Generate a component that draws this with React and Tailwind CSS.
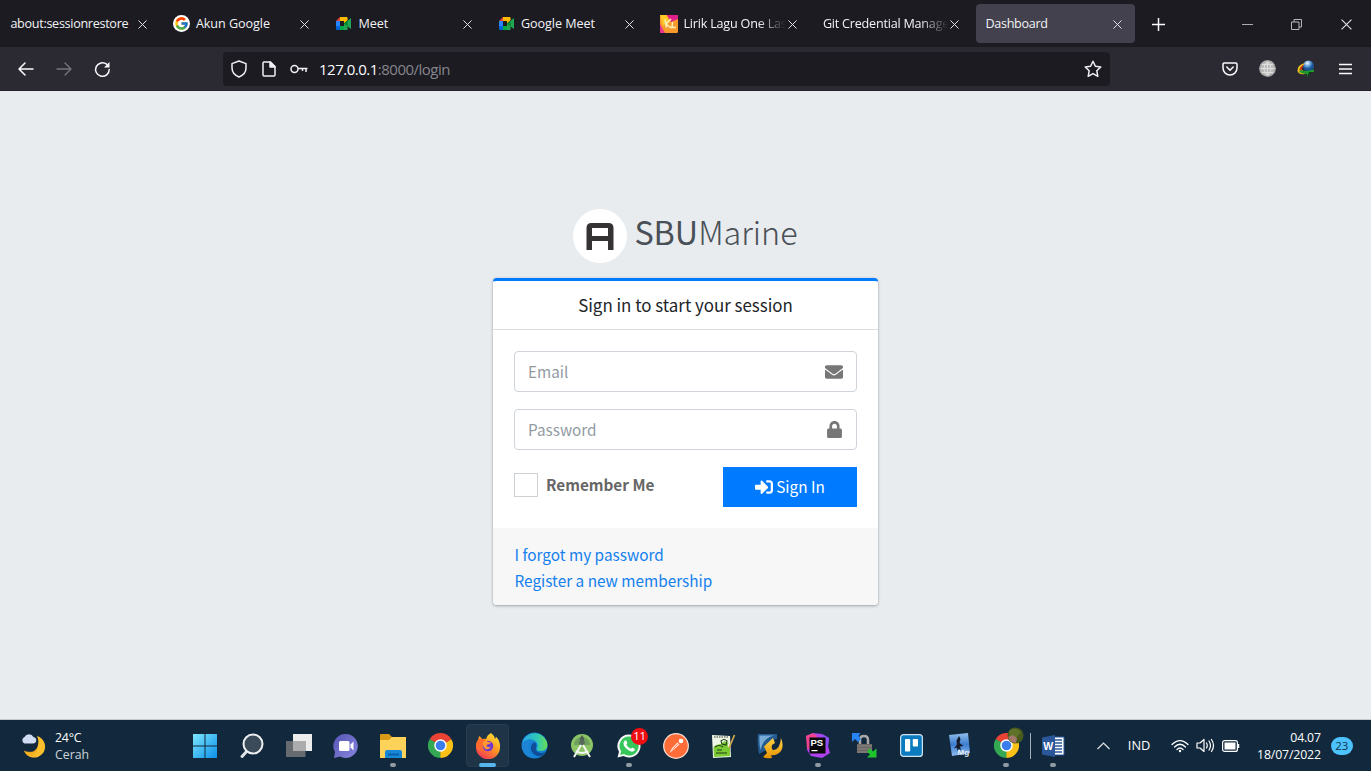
import React from "react";
import { FcGoogle } from "react-icons/fc";
import { FaEnvelope, FaLock, FaSignInAlt } from "react-icons/fa";

const Cross = ({ size = 9, w = 1.1 }) => (
  <svg width={size} height={size} viewBox="0 0 10 10" fill="none" stroke="#e4e4ea" strokeWidth={w}>
    <path d="M.5.5l9 9M9.5.5l-9 9" />
  </svg>
);

const MeetIcon = () => (
  <svg width="17" height="15" viewBox="0 0 17 15">
    <path d="M5 1h7v4H5z" fill="#ffba00" />
    <path d="M5 1v4H1z" fill="#ea4335" />
    <path d="M1 5h4v5H1z" fill="#2684fc" />
    <path d="M1 10h4v4H2.200Q1 14 1 12.800z" fill="#0066da" />
    <path d="M5 10h4.500l3 4H5z" fill="#00ac47" />
    <path d="M5 5h4v5H5z" fill="#1c1b22" />
    <path d="M9 7.500l3.600-3.500V2Q12.600 1 11.500 1H9z" fill="#ffba00" />
    <path d="M9 7.500l7-5.500v11l-3.500-2.500V14H9z" fill="#22a550" />
    <path d="M9 7.500l3.600-3v6z" fill="#00832d" />
  </svg>
);

const LyricIcon = () => (
  <svg width="18" height="18" viewBox="0 0 18 18">
    <rect width="18" height="18" rx="1.500" fill="#f79a2c" />
    <path d="M7 0h11v4L11 7z" fill="#e0218a" />
    <path d="M0 9l5 9H0z" fill="#e8338d" />
    <path d="M0 0h6l3 5-6 6z" fill="#ffc928" />
    <path d="M5 4.500l1.500 8M11 4l-5 5 5 4M12.500 7l-.5 5.500h4" stroke="#fff0b8" strokeWidth="1.600" fill="none" />
  </svg>
);

const tabs = [
  { title: "about:sessionrestore", spacing: "tracking-[-0.3px]" },
  {
    title: "Akun Google",
    spacing: "tracking-[-0.06px]",
    icon: (
      <span className="flex h-[17px] w-[17px] items-center justify-center rounded-full bg-white">
        <FcGoogle size={15} />
      </span>
    ),
  },
  { title: "Meet", spacing: "tracking-[-0.06px]", icon: <MeetIcon /> },
  { title: "Google Meet", spacing: "tracking-[-0.06px]", icon: <MeetIcon /> },
  { title: "Lirik Lagu One Las", spacing: "tracking-[-0.2px]", icon: <LyricIcon />, fade: true },
  { title: "Git Credential Manage", spacing: "tracking-[-0.22px]", fade: true },
  { title: "Dashboard", spacing: "tracking-[-0.3px]", active: true },
];

function TabStrip() {
  return (
    <div className="flex h-[47px] bg-[#1c1b22] text-[12.600px] text-[#f3f3f6]">
      <div className="ml-[-0.600px] flex">
        {tabs.map((t) => (
          <div key={t.title} className="flex w-[162.500px] px-[2px] py-1">
            <div
              className={
                t.active
                  ? "flex min-w-0 flex-1 items-center rounded bg-[#42414d] pr-[13px] pl-[9px]"
                  : "flex min-w-0 flex-1 items-center pr-[13px] pl-[9px]"
              }
            >
              {t.icon && <span className="mr-[5px] flex w-[18px] shrink-0 items-center">{t.icon}</span>}
              <span
                className={
                  t.fade
                    ? "min-w-0 flex-1 pt-[2px] whitespace-nowrap [mask-image:linear-gradient(to_left,transparent,black_28px)]"
                    : "min-w-0 flex-1 pt-[2px] whitespace-nowrap"
                }
              >
                <span className={t.spacing}>{t.title}</span>
              </span>
              <span className="ml-[2px] flex shrink-0 pt-px">
                <Cross />
              </span>
            </div>
          </div>
        ))}
      </div>
      <div className="flex flex-1 items-center pt-px">
        <svg className="ml-[15px]" width="13" height="13" viewBox="0 0 13 13" stroke="#fbfbfe" strokeWidth="1.500">
          <path d="M6.500 0v13M0 6.500h13" />
        </svg>
        <svg className="ml-[77px]" width="11" height="11" viewBox="0 0 11 11" stroke="#a9a9af" strokeWidth="1">
          <path d="M0 5.500h11" />
        </svg>
        <svg className="ml-[38px]" width="11" height="11" viewBox="0 0 11 11" fill="none" stroke="#b5b5bb">
          <path d="M.5 3h7.500v7.500H.5zM3 3V.5h7.500V8H8" />
        </svg>
        <span className="ml-[39px] flex">
          <Cross size={11} w={1} />
        </span>
      </div>
    </div>
  );
}

function NavBar() {
  return (
    <div className="flex h-11 items-center border-b border-[#24232b] bg-[#2b2a33]">
      <svg className="ml-[18px]" width="16" height="14" viewBox="0 0 16 14" fill="none" stroke="#fbfbfe" strokeWidth="1.500" strokeLinecap="round" strokeLinejoin="round">
        <path d="M15 7H1M7 1L1 7l6 6" />
      </svg>
      <svg className="ml-[22px]" width="16" height="14" viewBox="0 0 16 14" fill="none" stroke="#77767f" strokeWidth="1.300" strokeLinecap="round" strokeLinejoin="round">
        <path d="M1 7h14M9 1l6 6-6 6" />
      </svg>
      <svg className="mt-px ml-[22px]" width="17" height="17" viewBox="0 0 17 17" fill="none" stroke="#fbfbfe" strokeWidth="1.500" strokeLinecap="round">
        <path d="M15.200 8.500A6.800 6.800 0 1 1 12.600 3.200" />
        <path d="M15.500 1v5.500H10z" fill="#fbfbfe" stroke="none" />
      </svg>
      <div className="ml-[112px] flex h-[34px] w-[887px] items-center rounded bg-[#1c1b22]">
        <svg className="ml-2" width="16" height="18" viewBox="0 0 16 18" fill="none" stroke="#f0f0f4" strokeWidth="1.500" strokeLinejoin="round">
          <path d="M8 1l7 2.600V8c0 4-3 7.300-7 9-4-1.700-7-5-7-9V3.600z" />
        </svg>
        <svg className="ml-[15px]" width="14" height="16" viewBox="0 0 14 16" fill="none" stroke="#f0f0f4" strokeWidth="1.500" strokeLinejoin="round">
          <path d="M1 2q0-1 1-1h6.500L13 5.500V14q0 1-1 1H2q-1 0-1-1z" />
          <path d="M8 1v5h5z" fill="#f0f0f4" />
        </svg>
        <svg className="ml-[14px]" width="18" height="10" viewBox="0 0 18 10" fill="none" stroke="#f0f0f4" strokeWidth="1.500">
          <circle cx="4.500" cy="5" r="3.500" />
          <path d="M8 4.500h9.500M12.500 4.500V7M16 4.500V8" />
        </svg>
        <span className="ml-[11px] flex-1 pt-[2px] text-[15px] tracking-[-0.5px] text-[#85858c]">
          <span className="text-[#fbfbfe]">127.0.0.1</span>:8000/login
        </span>
        <svg className="mr-2" width="18" height="18" viewBox="0 0 18 18" fill="none" stroke="#f0f0f4" strokeWidth="1.500" strokeLinejoin="round">
          <path d="M9 1.200l2.400 5 5.400.7-4 3.800 1 5.600L9 13.600l-4.800 2.700 1-5.600-4-3.800 5.400-.7z" />
        </svg>
      </div>
      <svg className="ml-[112px]" width="16" height="14" viewBox="0 0 16 14" fill="none" stroke="#fbfbfe" strokeWidth="1.500" strokeLinejoin="round" strokeLinecap="round">
        <path d="M2.200 1h11.600Q15 1 15 2.200V6A7 7 0 0 1 1 6V2.200Q1 1 2.200 1zM4.800 5L8 8.200 11.200 5" />
      </svg>
      <svg className="ml-[21px]" width="17" height="17" viewBox="0 0 17 17">
        <circle cx="8.500" cy="8.500" r="8.300" fill="#b9b9b9" />
        <path d="M8.500 1v15M1 8.500h15M2.500 4.500h12M2.500 12.500h12M8.500 1Q1.500 8.500 8.500 16M8.500 1q7 7.500 0 15" stroke="#e2e2e2" fill="none" strokeWidth=".9" />
        <circle cx="8.500" cy="8.500" r="7.500" fill="none" stroke="#9c9c9c" strokeWidth=".8" />
      </svg>
      <svg className="ml-[21px]" width="18" height="17" viewBox="0 0 18 17">
        <defs>
          <radialGradient id="orb" cx=".4" cy=".25">
            <stop offset="0" stopColor="#f1f8ff" />
            <stop offset=".6" stopColor="#5a9bd8" />
            <stop offset="1" stopColor="#1b5395" />
          </radialGradient>
        </defs>
        <circle cx="11.500" cy="6" r="5.500" fill="url(#orb)" />
        <path d="M8 3Q0 5 .5 11 2 15 8 14L6 11Q3 9 8 3z" fill="#e9c61a" />
        <path d="M7 4.500Q2 7 2.500 11l2-1Q5 7 7 4.500z" fill="#c52a1a" />
        <path d="M4 10q5 2 13-.5L17 12h-3l-4 5v-3q-5 0-8-2z" fill="#1f9a2a" />
        <path d="M12 12h3l-5 5z" fill="#07410b" />
      </svg>
      <svg className="ml-[24px]" width="13" height="12" viewBox="0 0 13 12" stroke="#fbfbfe" strokeWidth="1.500">
        <path d="M0 1.500h13M0 6h13M0 10.500h13" />
      </svg>
    </div>
  );
}

function Field({ label, children }) {
  return (
    <div className="flex h-[41px] items-center justify-between rounded-[4px] border border-[#ced4da] bg-white px-[13px] text-[15.300px] leading-none text-[#939ba2]">
      <span>{label}</span>
      <span className="flex text-[#777]">{children}</span>
    </div>
  );
}

function LoginPage() {
  return (
    <main className="flex h-[629px] flex-col items-center border-b border-[#c4c8cb] bg-[#e9ecef] pt-[118px] font-['Noto_Sans_CJK_SC',sans-serif]">
      <div className="flex h-[54px] items-center text-[32.300px] leading-none text-[#495057]">
        <svg className="mr-[7px]" width="54" height="54" viewBox="0 0 54 54">
          <circle cx="27" cy="27" r="27" fill="#fff" />
          <path d="M13.500 41V19q0-5 5-5h17q5 0 5 5v22h-5.500v-9H19v9zM19 19v8h16v-8z" fill="#343233" fillRule="evenodd" />
        </svg>
        <span className="-mt-[10px] whitespace-nowrap">
          SBU<span className="font-light">Marine</span>
        </span>
      </div>
      <section className="mt-[15px] flex w-[385px] flex-col overflow-hidden rounded-[4px] border-t-[3px] border-[#007bff] bg-white shadow-[0_0_1px_rgba(0,0,0,.2),0_1px_3px_rgba(0,0,0,.3)]">
        <header className="flex h-[49px] items-center justify-center border-b border-[#dcdddf] text-[16.900px] leading-none text-[#212529]">
          Sign in to start your session
        </header>
        <div className="flex h-[198px] flex-col gap-[17px] px-[21px] pt-[21px]">
          <Field label="Email">
            <FaEnvelope size={18} />
          </Field>
          <Field label="Password">
            <FaLock size={17} />
          </Field>
          <div className="flex justify-between">
            <label className="mt-[6px] flex h-6 items-center gap-2 text-[15.300px] leading-none font-bold text-[#666]">
              <span className="h-6 w-6 border border-[#ccd1d5] bg-white" />
              Remember Me
            </label>
            <button className="flex h-10 w-[134px] items-center justify-center gap-[3px] bg-[#007bff] text-[15.300px] leading-none text-white">
              <FaSignInAlt size={18} />
              Sign In
            </button>
          </div>
        </div>
        <footer className="flex h-[77px] flex-col bg-[#f7f7f7] px-[21.500px] pt-[12.500px] text-[15.350px] leading-[26px] text-[#1480ee]">
          <a>I forgot my password</a>
          <a>Register a new membership</a>
        </footer>
      </section>
    </main>
  );
}

const WindowsIcon = () => (
  <svg width="26" height="26" viewBox="0 0 26 26">
    <defs>
      <linearGradient id="win" x2="1" y2="1">
        <stop offset="0" stopColor="#7de6ff" />
        <stop offset="1" stopColor="#0b91e8" />
      </linearGradient>
    </defs>
    <path d="M1 1h11.500v11.500H1zM13.500 1H25v11.500H13.500zM1 13.500h11.500V25H1zM13.500 13.500H25V25H13.500z" fill="url(#win)" />
  </svg>
);

const SearchIcon = () => (
  <svg width="26" height="26" viewBox="0 0 26 26">
    <path d="M8.500 17.500L3 23.500" stroke="#dfe3e7" strokeWidth="3" strokeLinecap="round" />
    <circle cx="14" cy="11" r="9.500" fill="#3c4b59" stroke="#eef0f2" strokeWidth="2" />
  </svg>
);

const TaskViewIcon = () => (
  <svg width="26" height="26" viewBox="0 0 26 26">
    <path d="M7 1h19v17H7z" fill="#ececec" />
    <path d="M0 8h19.500v16H0z" fill="#666b70" />
    <path d="M7 8h12.500v10H7z" fill="#aaacad" />
  </svg>
);

const ChatIcon = () => (
  <svg width="26" height="26" viewBox="0 0 26 26">
    <defs>
      <linearGradient id="chat" x2="1" y2="1">
        <stop offset="0" stopColor="#5554b4" />
        <stop offset="1" stopColor="#8986df" />
      </linearGradient>
    </defs>
    <path d="M13 1a12 12 0 1 1-6 22.500L1 25l1-6A12 12 0 0 1 13 1z" fill="url(#chat)" />
    <rect x="6" y="8" width="10.500" height="10" rx="1.500" fill="#fff" />
    <path d="M17.500 11.500l3-3v9l-3-3z" fill="#fff" />
  </svg>
);

const FolderIcon = () => (
  <svg width="28" height="26" viewBox="0 0 28 26">
    <path d="M1 2q0-1 1-1h8l3 3v4H1z" fill="#d89a17" />
    <path d="M1 7h9l3-3h14v21H1z" fill="#ffd35a" />
    <path d="M6 25v-6q0-2 2-2h13q2 0 2 2v6z" fill="#1787d8" />
    <path d="M9 20.500h11v2H9z" fill="#0a5fa8" />
  </svg>
);

const ChromeIcon = () => (
  <svg width="25" height="25" viewBox="0 0 24 24">
    <path d="M12 12L1.600 6A12 12 0 0 1 22.400 6z" fill="#ea4335" />
    <path d="M12 12L22.400 6A12 12 0 0 1 12 24z" fill="#fbc116" />
    <path d="M12 12v12A12 12 0 0 1 1.600 6z" fill="#34a853" />
    <path d="M12 6h10.400L12 12z" fill="#ea4335" />
    <path d="M17.200 15L12 24V12z" fill="#fbc116" />
    <path d="M6.800 15L1.600 6 12 12z" fill="#34a853" />
    <circle cx="12" cy="12" r="6" fill="#fff" />
    <circle cx="12" cy="12" r="4.600" fill="#3b7ded" />
  </svg>
);

const FirefoxIcon = () => (
  <svg width="26" height="26" viewBox="0 0 26 26">
    <defs>
      <linearGradient id="fox" x1=".8" y1="0" x2=".2" y2="1">
        <stop offset="0" stopColor="#ffe638" />
        <stop offset=".45" stopColor="#ff9a1f" />
        <stop offset="1" stopColor="#f5305a" />
      </linearGradient>
    </defs>
    <path d="M16 0q3 2 4 6 1-1 .8-2.500Q25.500 8 25 14.500A12 12 0 0 1 1 14Q1 9 3.500 6L4 3q2 1 3 3 2-.7 4 0 1-4 5-6z" fill="url(#fox)" />
    <path d="M3.500 6Q7 5 10 7l3 2-4 2q-4 4 1 8-8-1-9-6 0-4 2.500-7z" fill="#ff6a2e" />
    <circle cx="13" cy="13" r="5.300" fill="#7038d0" />
    <path d="M8 8.500q3-1.500 5 .5l3 .5q-1 2-4 2-1 2 1 2.500 2 .5 3-.3Q14 17 10.500 16q-3.500-3-2.500-7.500z" fill="#ff9830" />
  </svg>
);

const EdgeIcon = () => (
  <svg width="27" height="27" viewBox="0 0 27 27">
    <defs>
      <linearGradient id="edge1" x2="1">
        <stop offset="0" stopColor="#29a9e8" />
        <stop offset=".6" stopColor="#2fc9b6" />
        <stop offset="1" stopColor="#6bdc51" />
      </linearGradient>
    </defs>
    <circle cx="13.500" cy="13.500" r="13" fill="#1482d6" />
    <path d="M1 11A13 13 0 0 1 26.500 13Q26 19 19 19q-4 0-3-3 2-4-2-7Q8 5 1 11z" fill="url(#edge1)" />
    <path d="M14 9Q9 8 7.500 14 7 21 14 26 5 26 2 18 0 13 2 10q6-5 12-1z" fill="#1d84d6" />
    <path d="M14 10q-5 2-4 8 3 7 10 6 3-1 4.500-4-5 2-8.500-.5-2-1.500-1-4 1-3-1-5.500z" fill="#104d99" />
  </svg>
);

const AndroidStudioIcon = () => (
  <svg width="24" height="26" viewBox="0 0 24 26">
    <circle cx="12" cy="12" r="11" fill="#8bc467" />
    <path d="M4 12a8 8 0 0 1 16 0z" fill="#6f9f5c" />
    <path d="M10 5l2-3 2 3v3h-4z" fill="#4f5f54" />
    <circle cx="12" cy="9.500" r="2.800" fill="#536b58" />
    <path d="M11 12L4 24M13 12l7 12M6 18q6 4 12 0" stroke="#f3f6f3" strokeWidth="2" fill="none" />
  </svg>
);

const WhatsAppIcon = () => (
  <span className="relative flex">
    <svg width="24" height="24" viewBox="0 0 24 24">
      <path d="M12 .5a11.500 11.500 0 1 1-5.500 21.600L.5 23.500 2 17.800A11.500 11.500 0 0 1 12 .5z" fill="#f5f7f6" />
      <path d="M12 2.500a9.500 9.500 0 1 1-5 17.500L3.200 21l1-3.700A9.500 9.500 0 0 1 12 2.500z" fill="#35c759" />
      <path d="M8 6.500q1-.5 1.500.5l.8 2q0 .8-1 1.500 1.500 3 4.500 4.200l1.200-1.200 2.800 1.500q.2 2-2 2.600-3 .3-6.300-2.800Q6.200 11.500 6.500 9 6.800 7.300 8 6.500z" fill="#fff" />
    </svg>
    <span className="absolute -top-[6px] left-[14px] flex h-[17px] w-[17px] items-center justify-center rounded-full bg-[#f00d12] text-[11.500px] leading-none tracking-[-0.3px] text-white">
      11
    </span>
  </span>
);

const PostmanIcon = () => (
  <svg width="26" height="26" viewBox="0 0 26 26">
    <circle cx="13" cy="13" r="12.300" fill="#ff6c37" stroke="#f7e2d8" strokeWidth="1.200" />
    <path d="M14.500 9.500l2 2-5.500 5-4.500 3.500 2.500-5z" fill="#ffe3d8" />
    <circle cx="18" cy="8" r="2.300" fill="#fff" />
    <path d="M15.500 10.500l-6 6" stroke="#ff8c60" />
  </svg>
);

const NotepadIcon = () => (
  <svg width="26" height="26" viewBox="0 0 26 26">
    <path d="M2 2l18 1 1 21-18 1z" fill="#eef4e4" />
    <path d="M4 4h15" stroke="#8a948c" strokeDasharray="1.500 1" strokeWidth="2" />
    <path d="M3.500 14q3-3 8-3l3-3 4 2-1 3 2.500 2v8L4 24z" fill="#7ccb35" />
    <path d="M11 8q3-3 6 0l-1 4-4-1zM5 14q4-3 8 0M6 20h11M7 17h5" stroke="#1c3e16" strokeWidth="1.100" fill="none" />
    <path d="M24.500 2L19 15" stroke="#cfa84e" strokeWidth="1.700" />
  </svg>
);

const SwooshIcon = () => (
  <svg width="26" height="26" viewBox="0 0 26 26">
    <defs>
      <linearGradient id="sw" x2="0" y2="1">
        <stop offset="0" stopColor="#ffd348" />
        <stop offset="1" stopColor="#e79200" />
      </linearGradient>
    </defs>
    <path d="M1 1h19v5q-9 1-9 10l-9 5Q0 11 1 1z" fill="#245b90" />
    <path d="M2.500 2.500H17Q6 5 3.500 17 2 10 2.500 2.500z" fill="#78acd6" />
    <path d="M7 13.500l9-8.500 2 5-3 2q-1 5 2 5 6-1 7-12 4 10-2 15-4 3-8 2l1 3q-6 1-9-1l4-4z" fill="url(#sw)" />
  </svg>
);

const PhpStormIcon = () => (
  <svg width="27" height="27" viewBox="0 0 27 27">
    <path d="M2 4l7-3 9 1 7 4-1 8 2 7-8 5-11-2-4-6 1-6z" fill="#b042ee" />
    <path d="M2 4l7-3 4 3-6 12-4 1z" fill="#f0438f" />
    <path d="M18 2l7 4-1 9-6-2z" fill="#8b50f5" />
    <path d="M5.500 5.500h16v16h-16z" fill="#090909" />
    <text x="6.500" y="14" fontSize="9.500" fontWeight="700" fill="#fff" fontFamily="Liberation Sans, sans-serif">PS</text>
    <path d="M7.500 18h6v1.200h-6z" fill="#fff" />
  </svg>
);

const LockSyncIcon = () => (
  <svg width="27" height="27" viewBox="0 0 27 27">
    <path d="M9 13V8q0-4 4-4t4 4v5" fill="none" stroke="#a8a8a8" strokeWidth="2.500" />
    <path d="M1 1h8.500L7.500 4l2.500 3-3 3-3-3L1 10z" fill="#2684f5" />
    <path d="M6 12h15v9H6z" fill="#6c6765" />
    <path d="M6 14h15M6 17h15M6 20h15" stroke="#96908d" strokeWidth=".8" />
    <path d="M25.500 25.500H16l3-3-3-3 3-3 3 3 3.500-3z" fill="#1fc52c" />
  </svg>
);

const TrelloIcon = () => (
  <svg width="23" height="23" viewBox="0 0 23 23">
    <rect x=".6" y=".6" width="21.800" height="21.800" rx="3" fill="#0b7bbf" stroke="#cfe3ef" strokeWidth="1.200" />
    <rect x="5" y="5" width="5.200" height="12.500" rx=".8" fill="#fff" />
    <rect x="12.800" y="5" width="5.200" height="7.500" rx=".8" fill="#fff" />
  </svg>
);

const PlaneIcon = () => (
  <svg width="25" height="27" viewBox="0 0 25 27">
    <defs>
      <linearGradient id="sky" x2="0" y2="1">
        <stop offset="0" stopColor="#91bdeb" />
        <stop offset=".5" stopColor="#3c7dd0" />
        <stop offset="1" stopColor="#8fbcf0" />
      </linearGradient>
    </defs>
    <path d="M2 3l19-2 2 20-18 3z" fill="url(#sky)" />
    <path d="M12 4l1.500 3-1 4 4 3-3.500.5 1 4-2-2-1.500 3-.5-4-3 1 3-4-.5-4z" fill="#141a26" />
    <text x="10.500" y="23" fontSize="8" fontWeight="700" fill="#e8edf2" fontFamily="Liberation Sans, sans-serif">Mg</text>
  </svg>
);

const ChromeProfileIcon = () => (
  <span className="relative flex">
    <ChromeIcon />
    <svg className="absolute -top-[6px] left-[13px]" width="17" height="17" viewBox="0 0 17 17">
      <circle cx="8.500" cy="8.500" r="8" fill="#485a1d" />
      <path d="M2 4q6-5 12 1l-4 5-7 1z" fill="#5f7228" />
      <path d="M1 10l5-2 4 3-1 5-5-1z" fill="#a5776b" />
    </svg>
  </span>
);

const WordIcon = () => (
  <svg width="24" height="24" viewBox="0 0 24 24">
    <path d="M12 3h11v18H12z" fill="#fff" stroke="#2b579a" />
    <path d="M14 6h7M14 9h7M14 12h7M14 15h7M14 18h7" stroke="#2b579a" strokeWidth="1.300" />
    <path d="M1 3.500L14 1v22L1 20.500z" fill="#2b579a" />
    <text x="2.200" y="15.800" fontSize="10.500" fontWeight="700" fill="#fff" fontFamily="Liberation Sans, sans-serif">W</text>
  </svg>
);

const apps = [
  { name: "start", Icon: WindowsIcon },
  { name: "search", Icon: SearchIcon },
  { name: "tasks", Icon: TaskViewIcon },
  { name: "chat", Icon: ChatIcon },
  { name: "files", Icon: FolderIcon, open: true },
  { name: "chrome", Icon: ChromeIcon },
  { name: "firefox", Icon: FirefoxIcon, current: true },
  { name: "edge", Icon: EdgeIcon },
  { name: "studio", Icon: AndroidStudioIcon },
  { name: "whatsapp", Icon: WhatsAppIcon, open: true },
  { name: "postman", Icon: PostmanIcon },
  { name: "notepad", Icon: NotepadIcon },
  { name: "swoosh", Icon: SwooshIcon },
  { name: "phpstorm", Icon: PhpStormIcon, open: true },
  { name: "sync", Icon: LockSyncIcon },
  { name: "trello", Icon: TrelloIcon },
  { name: "plane", Icon: PlaneIcon },
  { name: "chrome-profile", Icon: ChromeProfileIcon, open: true, divider: true },
  { name: "word", Icon: WordIcon, open: true },
];

function Taskbar() {
  return (
    <footer className="flex h-[51px] items-center bg-[#12293d] text-[12.300px] leading-[17px] text-white">
      <div className="flex w-[181.200px] items-center pl-5">
        <svg width="26" height="26" viewBox="0 0 26 26">
          <path d="M17 3a11 11 0 1 1-13 15q10 4 13.500-4 2-6-.5-11z" fill="#fdc02c" />
          <path d="M4 17.500q10 4 14-4-1 9-7 10.500-5-1-7-6.500z" fill="#f5a81b" opacity=".6" />
          <path d="M4.500 10.500a3.500 3.500 0 0 1 0-6.500 5 5 0 0 1 9 0 3.300 3.300 0 0 1 0 6.500z" fill="#cfdcf3" />
        </svg>
        <div className="ml-[9px] flex flex-col pt-px">
          <span className="tracking-[-0.2px]">24°C</span>
          <span className="text-[#cdd3d9]">Cerah</span>
        </div>
      </div>
      <div className="flex h-full">
        {apps.map(({ name, Icon, open, current, divider }) => (
          <div key={name} className="relative flex w-[47.150px] items-center justify-center">
            <div
              className={
                current
                  ? "flex h-[43px] w-[43px] items-center justify-center rounded-[4px] border border-[#273c4e] bg-[#1f3447]"
                  : "flex h-[43px] w-[43px] items-center justify-center"
              }
            >
              <Icon />
            </div>
            {open && <span className="absolute bottom-1 left-[20.500px] h-1 w-[6px] rounded-full bg-[#929ba3]" />}
            {current && <span className="absolute bottom-1 left-[15px] h-1 w-[17px] rounded-full bg-[#55b5ec]" />}
            {divider && <span className="absolute top-[13px] -right-px h-[26px] w-px bg-[#a7b0b8]" />}
          </div>
        ))}
      </div>
      <div className="flex flex-1 items-center">
        <svg className="ml-5" width="13" height="8" viewBox="0 0 13 8" fill="none" stroke="#dfe3e7" strokeWidth="1.200">
          <path d="M.5 7l6-6 6 6" />
        </svg>
        <span className="ml-[18px] w-[43px] text-[12.800px]">IND</span>
        <svg width="18" height="14" viewBox="0 0 18 14" fill="none" stroke="#fff" strokeWidth="1.200" strokeLinecap="round">
          <path d="M1 5.500q8-8 16 0M3.500 8q5.500-5.500 11 0M6 10.500q3-3 6 0" />
          <circle cx="9" cy="12" r="1.200" fill="#fff" stroke="none" />
        </svg>
        <svg className="ml-[7px]" width="19" height="15" viewBox="0 0 19 15" fill="none" stroke="#fff" strokeWidth="1.200" strokeLinejoin="round" strokeLinecap="round">
          <path d="M1 5h3l4-3.500v12L4 10H1zM10.500 5q1.500 2.500 0 5M13 3q3 4.500 0 9M15.500 1.500q4 6 0 12" />
        </svg>
        <svg className="ml-[7px]" width="18" height="12" viewBox="0 0 18 12" fill="none">
          <rect x=".6" y=".6" width="14.800" height="10.800" rx="2" stroke="#fff" strokeWidth="1.200" />
          <rect x="2.500" y="2.500" width="11" height="7" fill="#fff" />
          <path d="M16.500 4v4" stroke="#fff" strokeWidth="1.500" />
        </svg>
        <div className="flex w-[81px] flex-col items-end tracking-[-0.15px]">
          <span>04.07</span>
          <span>18/07/2022</span>
        </div>
        <span className="ml-[10px] flex h-[18px] w-[22px] items-center justify-center rounded-full bg-[#4cc2ff] text-[11.500px] leading-none text-[#12324a]">
          23
        </span>
      </div>
    </footer>
  );
}

export default function App() {
  return (
    <div className="flex h-[771px] w-[1371px] flex-col overflow-hidden font-['Open_Sans','Noto_Sans',sans-serif]">
      <TabStrip />
      <NavBar />
      <LoginPage />
      <Taskbar />
    </div>
  );
}
